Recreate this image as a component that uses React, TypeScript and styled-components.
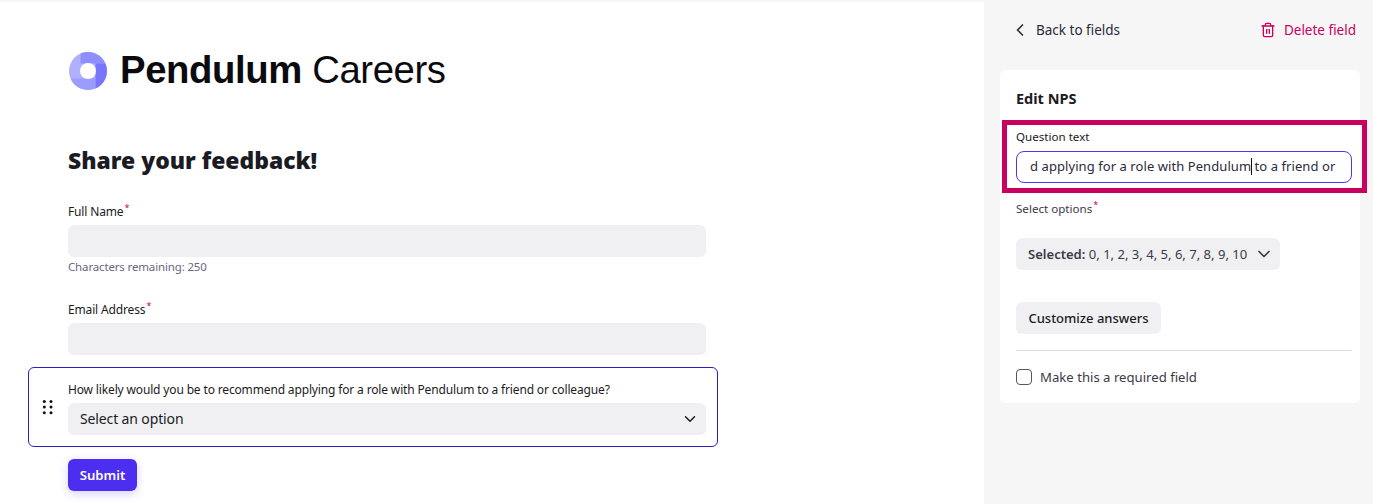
import React from "react";
import styled, { createGlobalStyle } from "styled-components";
import { ChevronLeft, ChevronDown, Trash2 } from "lucide-react";

const Global = createGlobalStyle`
  html, body { margin: 0; padding: 0; background: #fff; }
  body { font-family: "Noto Sans", "Open Sans", sans-serif; color: #1b1b23; }
  * { box-sizing: border-box; }
`;

const Page = styled.div`
  display: flex;
  width: 1373px;
  height: 504px;
  overflow: hidden;
  position: relative;
  box-shadow: inset 0 3px 3px -2px rgba(0, 0, 0, 0.06);
`;
const Main = styled.main`
  flex: 1;
  padding: 52px 0 0 28px;
`;
const Brand = styled.div`
  display: flex;
  align-items: center;
  gap: 12px;
  height: 37px;
  margin-left: 40px;
  font-family: "Liberation Sans", Arial, sans-serif;
  font-size: 38.3px;
  letter-spacing: -0.4px;
  color: #0b0b0f;
  white-space: nowrap;
  b { font-weight: 700; }
  span { position: relative; top: -1px; }
`;
const Title = styled.h1`
  margin: 54px 0 0 40px;
  font-size: 22.9px;
  line-height: 36px;
  font-weight: 900;
  color: #1b1b23;
`;
const Field = styled.div<{ $top: number }>`
  margin: ${(p) => p.$top}px 0 0 40px;
  width: 638px;
`;
const Label = styled.label`
  display: block;
  font-size: 12px;
  line-height: 16px;
  height: 21px;
  color: #1b1b23;
  white-space: nowrap;
  letter-spacing: -0.15px;
`;
const Star = styled.sup`
  color: #c9005f;
  font-size: 9px;
  line-height: 0;
  margin-left: 1px;
`;
const Input = styled.div`
  height: 32px;
  background: #f0f0f3;
  border-radius: 6px;
`;
const Hint = styled.div`
  font-size: 11.5px;
  line-height: 16px;
  margin-top: 2px;
  padding-bottom: 1px;
  color: #6c6682;
  letter-spacing: -0.15px;
`;
const Question = styled.div`
  width: 690px;
  height: 80px;
  margin-top: 12px;
  border: 1px solid #2a1fc7;
  border-radius: 6px;
  padding: 12px 0 0 39px;
  position: relative;
`;
const Grip = styled.svg`
  position: absolute;
  left: 13px;
  top: 32px;
`;
const QuestionBody = styled.div`
  width: 638px;
`;
const QuestionLabel = styled(Label)`
  height: 20px;
  line-height: 20px;
  margin-bottom: 3px;
`;
const Select = styled.div`
  display: flex;
  align-items: center;
  justify-content: space-between;
  height: 32px;
  padding: 0 7px 1px 12px;
  background: #f0f0f3;
  border-radius: 6px;
  font-size: 14px;
  letter-spacing: -0.13px;
  color: #1b1b23;
`;
const Submit = styled.button`
  display: block;
  width: 69px;
  height: 32px;
  margin: 12px 0 0 40px;
  border: 0;
  border-radius: 6px;
  background: #4c2ef0;
  color: #fff;
  font: 600 13.2px "Noto Sans", sans-serif;
  box-shadow: 0 3px 10px rgba(76, 46, 240, 0.22);
  padding: 0;
`;
const Side = styled.aside`
  width: 389px;
  background: #f6f6f7;
  padding: 0 16px;
`;
const SideHead = styled.div`
  display: flex;
  align-items: center;
  justify-content: space-between;
  height: 60px;
  padding: 0 1px 0 10px;
  font-size: 13.5px;
`;
const HeadLink = styled.span<{ $danger?: boolean }>`
  display: flex;
  align-items: center;
  gap: ${(p) => (p.$danger ? 8 : 6)}px;
  color: ${(p) => (p.$danger ? "#c9005f" : "#2a2a3c")};
`;
const Card = styled.section`
  width: 360px;
  height: 333px;
  margin-top: 10px;
  padding: 16px 8px 0 16px;
  background: #fff;
  border-radius: 6px;
`;
const CardTitle = styled.h2`
  margin: 0;
  font-size: 14.5px;
  line-height: 24px;
  font-weight: 700;
`;
const SideLabel = styled.label`
  display: block;
  margin-top: 19px;
  font-size: 11.6px;
  line-height: 16px;
  color: #1b1b23;
`;
const TextBox = styled.div`
  height: 32px;
  width: 336px;
  margin-top: 6px;
  padding: 0 13px;
  border: 1px solid #4f35f3;
  border-radius: 8px;
  font-size: 13px;
  line-height: 29px;
  letter-spacing: 0.07px;
  color: #2a2a3c;
`;
const TextClip = styled.div`
  overflow: hidden;
  white-space: nowrap;
  height: 30px;
`;
const Caret = styled.span`
  display: inline-block;
  width: 1px;
  height: 17px;
  margin-right: -1px;
  vertical-align: -4px;
  background: #111;
`;
const OptionsLabel = styled(SideLabel)`
  margin-top: 18px;
  color: #3a3a48;
`;
const OptionSelect = styled(Select)`
  width: 264px;
  margin-top: 21px;
  padding: 0 6px 0 12px;
  font-size: 13.05px;
  letter-spacing: 0;
  color: #3a3a48;
  white-space: nowrap;
  b { font-weight: 600; }
`;
const GhostButton = styled.button`
  display: block;
  width: 145px;
  height: 32px;
  margin-top: 32px;
  padding: 0;
  border: 0;
  border-radius: 6px;
  background: #f0f0f3;
  color: #1b1b23;
  font: 500 13px "Noto Sans", sans-serif;
`;
const Divider = styled.hr`
  width: 336px;
  margin: 16px 0 0;
  border: 0;
  border-top: 1px solid #dedee5;
`;
const CheckRow = styled.label`
  display: flex;
  align-items: center;
  gap: 8px;
  margin-top: 18px;
  font-size: 13.15px;
  line-height: 16px;
  color: #3a3a48;
`;
const Box = styled.span`
  width: 16px;
  height: 16px;
  border: 1px solid #55556a;
  border-radius: 4px;
  background: #fff;
`;
const Highlight = styled.div`
  position: absolute;
  left: 1002px;
  top: 120px;
  width: 365px;
  height: 73px;
  border: 5px solid #c9005f;
  pointer-events: none;
`;

const Logo = () => (
  <svg width="40" height="38" viewBox="0 0 40 38">
    <defs>
      <clipPath id="logo-disc">
        <circle cx="20" cy="19" r="19" />
      </clipPath>
    </defs>
    <g clipPath="url(#logo-disc)">
      <rect width="40" height="38" fill="#b0b0ff" />
      <rect x="12.5" y="0" width="28" height="11.5" fill="#8e8eff" />
      <rect x="0" y="26.5" width="27.5" height="12" fill="#9c9cff" />
      <rect x="27.5" y="11.5" width="13" height="27" fill="#7676ff" />
    </g>
    <circle cx="20" cy="19" r="8" fill="#fff" />
  </svg>
);

export default function App() {
  return (
    <Page>
      <Global />
      <Main>
        <Brand>
          <Logo />
          <span>
            <b>Pendulum</b> Careers
          </span>
        </Brand>
        <Title>Share your feedback!</Title>
        <Field $top={25}>
          <Label>
            Full Name<Star>*</Star>
          </Label>
          <Input />
          <Hint>Characters remaining: 250</Hint>
        </Field>
        <Field $top={26}>
          <Label>
            Email Address<Star>*</Star>
          </Label>
          <Input />
        </Field>
        <Question>
          <Grip width="12" height="16" viewBox="0 0 12 16" fill="#111">
            <circle cx="2.3" cy="1.5" r="1.5" />
            <circle cx="9" cy="1.5" r="1.5" />
            <circle cx="2.3" cy="7" r="1.5" />
            <circle cx="9" cy="7" r="1.5" />
            <circle cx="2.3" cy="12.7" r="1.5" />
            <circle cx="9" cy="12.7" r="1.5" />
          </Grip>
          <QuestionBody>
            <QuestionLabel>
              How likely would you be to recommend applying for a role with Pendulum to a friend or colleague?
            </QuestionLabel>
            <Select>
              <span>Select an option</span>
              <ChevronDown size={18} strokeWidth={2} />
            </Select>
          </QuestionBody>
        </Question>
        <Submit>Submit</Submit>
      </Main>
      <Side>
        <SideHead>
          <HeadLink>
            <ChevronLeft size={20} strokeWidth={2} />
            Back to fields
          </HeadLink>
          <HeadLink $danger>
            <Trash2 size={16} strokeWidth={2} />
            Delete field
          </HeadLink>
        </SideHead>
        <Card>
          <CardTitle>Edit NPS</CardTitle>
          <SideLabel>Question text</SideLabel>
          <TextBox>
            <TextClip>
              d applying for a role with Pendulum
              <Caret /> to a friend or colleague?
            </TextClip>
          </TextBox>
          <OptionsLabel>
            Select options<Star>*</Star>
          </OptionsLabel>
          <OptionSelect>
            <span>
              <b>Selected:</b> 0, 1, 2, 3, 4, 5, 6, 7, 8, 9, 10
            </span>
            <ChevronDown size={20} strokeWidth={2} />
          </OptionSelect>
          <GhostButton>Customize answers</GhostButton>
          <Divider />
          <CheckRow>
            <Box />
            Make this a required field
          </CheckRow>
        </Card>
      </Side>
      <Highlight />
    </Page>
  );
}
